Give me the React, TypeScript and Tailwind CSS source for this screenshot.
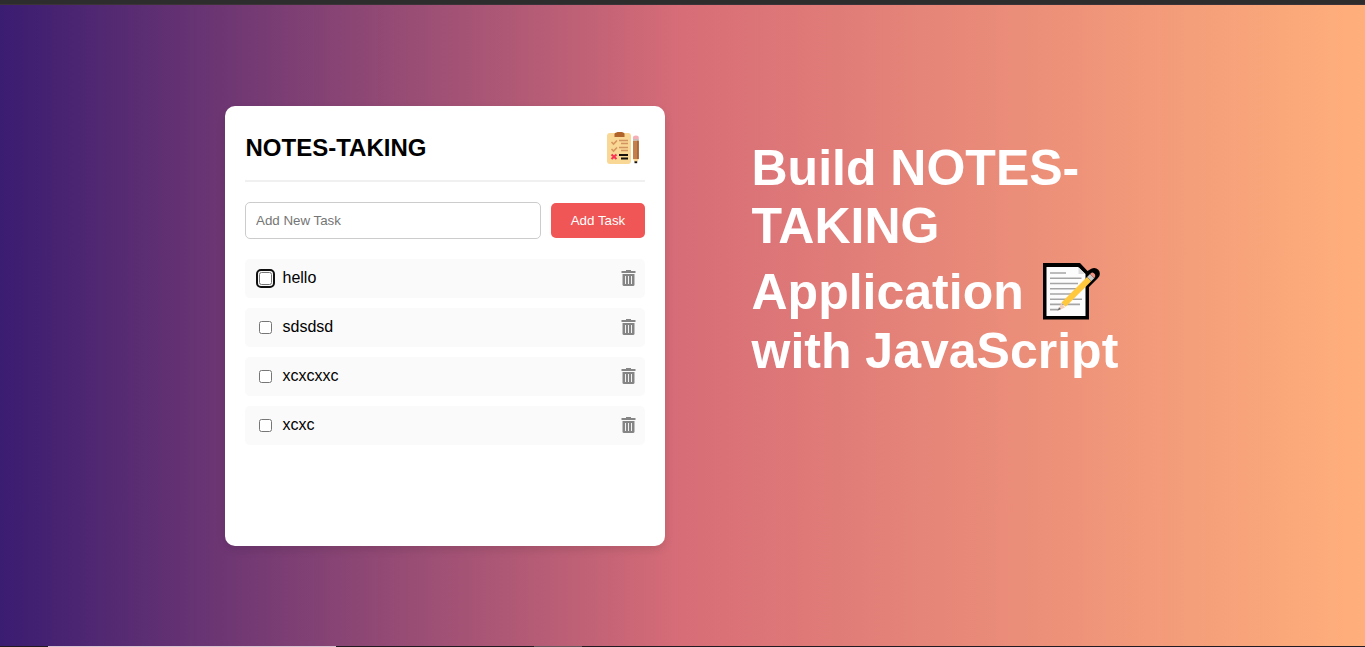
const tasks = ["hello", "sdsdsd", "xcxcxxc", "xcxc"];

function ClipboardIcon() {
  return (
    <svg className="block h-10 w-10 shrink-0" viewBox="0 0 40 40" fill="none">
      <rect x="2" y="5" width="24" height="31" rx="3" fill="#f9d795" />
      <path d="M9.500 6q0-1.500 2-1.500L12.500 4h4.500l1 .5q1.500 0 1.500 1.500v3h-10Z" fill="#b06429" />
      <path d="m6.500 14 2 2L12 12.500M6.500 21l2 2 3.500-3.500" stroke="#d6965f" strokeWidth="1.600" />
      <path d="M14 12.500h9M16 15.500h7M14 19.500h9M16 22.500h7" stroke="#d29460" strokeWidth="1.500" />
      <path d="m6.500 26.500 5 4.500m0-4.500-5 4.500" stroke="#fb3153" strokeWidth="2" />
      <path d="M14 27h9M16 30.500h7" stroke="#17120d" strokeWidth="1.900" />
      <path d="M28 11V10a2.800 2.300 0 0 1 5.800 0V11Z" fill="#f5aeb5" />
      <path d="M28 11h5.800v1.800H28Z" fill="#c8bdb8" />
      <path d="M28 12.800h5.800V31H28Z" fill="#c57f49" />
      <path d="M32 12.800h1.800V31H32Z" fill="#a9683c" />
      <path d="M28 31h5.800L32 34h-2.500Z" fill="#f9d795" />
      <path d="M29.500 33.300h2.700v1.900h-2.700Z" fill="#15120e" />
    </svg>
  );
}

function TrashIcon() {
  return (
    <svg className="mb-[2px] block h-4 w-[15px] shrink-0" viewBox="0 0 15 16" fill="none">
      <path d="M5 0h5v1h4.500v2H.5V1H5Z" fill="#858585" />
      <path d="M1.500 4h12v10.500Q13.500 16 12 16H3q-1.500 0-1.500-1.500Z" fill="#858585" />
      <path d="M4.500 6v8M7.500 6v8M10.500 6v8" stroke="#f2f2f2" />
    </svg>
  );
}

function MemoIcon() {
  return (
    <svg className="ml-[5.5px] inline-block h-[58px] w-[57px] align-[-12px]" viewBox="0 0 57 58" fill="none">
      <path d="M0 0h37l7.500 8L47 6.500A5.800 5.800 0 0 1 55 15L46 24V56.500H0Z" fill="#000" />
      <path d="M3.500 4H35l7.500 7v42h-39Z" fill="#fcfcfc" />
      <path d="M35.500 4v7H42Z" fill="#ddd" />
      <path d="M7 10h16M7 15.300h31.500M7 20.500h28M7 25.700h30M7 31h25M7 36.200h32M7 41.400h30M7 46.600h8" stroke="#a5a5a5" strokeWidth="1.600" />
      <path d="m18 40.500 4 4-6.500 3Z" fill="#f4cdb9" />
      <path d="m14.500 47.800 1.500-3.500L18 46Z" fill="#6b6b6b" />
      <path d="m18.500 39.500 25.500-25.500 4.200 4.200-25.500 25.500Z" fill="#ffc83d" />
      <path d="m44 14 3-3 4.200 4.200-3 3Z" fill="#c9c9c9" />
      <path d="m47 11 1.500-1.300q1-.7 2.500.5t1.300 3l-1.100 2Z" fill="#ef8f80" />
    </svg>
  );
}

export default function App() {
  return (
    <div className="flex h-[647px] w-full flex-col overflow-hidden bg-[linear-gradient(90deg,#3a1c71,#d76d77,#ffaf7b)] font-['Liberation_Sans',Arial,sans-serif] text-black">
      <div className="h-[5px] shrink-0 border-b border-[#3c3338] bg-[#2d2d2d]" />
      <main className="flex flex-1 items-start pl-[225px] pt-[101px]">
        <section className="h-[440px] w-[440px] shrink-0 rounded-[10px] bg-white px-5 shadow-[0_4px_8px_rgba(0,0,0,0.1)]">
          <header className="flex h-[76px] items-center justify-between border-b-2 border-[#f0f0f0] pt-[9px]">
            <h2 className="pl-[0.5px] text-2xl font-bold">NOTES-TAKING</h2>
            <ClipboardIcon />
          </header>
          <div className="mt-5 flex items-center gap-2.5">
            <input
              aria-label="New task"
              placeholder="Add New Task"
              className="h-[37px] min-w-0 flex-1 rounded-[5px] border border-[#ccc] bg-white px-2.5 text-[13.333px] placeholder:text-[#757575]"
            />
            <button className="h-[35px] w-[94px] rounded-[5px] bg-[#f05656] text-[13.333px] text-white">Add Task</button>
          </div>
          <ul className="mt-5 flex flex-col gap-2.5">
            {tasks.map((task, index) => (
              <li key={task} className="flex h-[39px] items-center rounded-[5px] bg-[#fafafa] pl-3.5 pr-[9px]">
                <span
                  className={
                    index === 0
                      ? "flex h-[13px] w-[13px] rounded-[2px] outline-2 outline-offset-1 outline-[#101010]"
                      : "flex h-[13px] w-[13px]"
                  }
                >
                  <input type="checkbox" aria-label={task} className="h-[13px] w-[13px]" />
                </span>
                <span className="ml-[10.5px] flex-1 pb-0.5 text-base leading-5">{task}</span>
                <TrashIcon />
              </li>
            ))}
          </ul>
        </section>
        <h1 className="ml-[86.5px] mt-[33px] w-[400px] text-[50px] font-bold leading-[58px] text-white">
          Build NOTES-
          <br />
          TAKING
          <br />
          <span className="inline-block pb-px pt-2 leading-[58px]">
            Application <MemoIcon />
          </span>
          <br />
          with JavaScript
        </h1>
      </main>
      <footer className="flex h-px shrink-0 bg-[#211a20]">
        <div className="ml-12 w-72 bg-[#d5c2cc]" />
        <div className="ml-[198px] w-12 bg-[#65565b]" />
      </footer>
    </div>
  );
}
